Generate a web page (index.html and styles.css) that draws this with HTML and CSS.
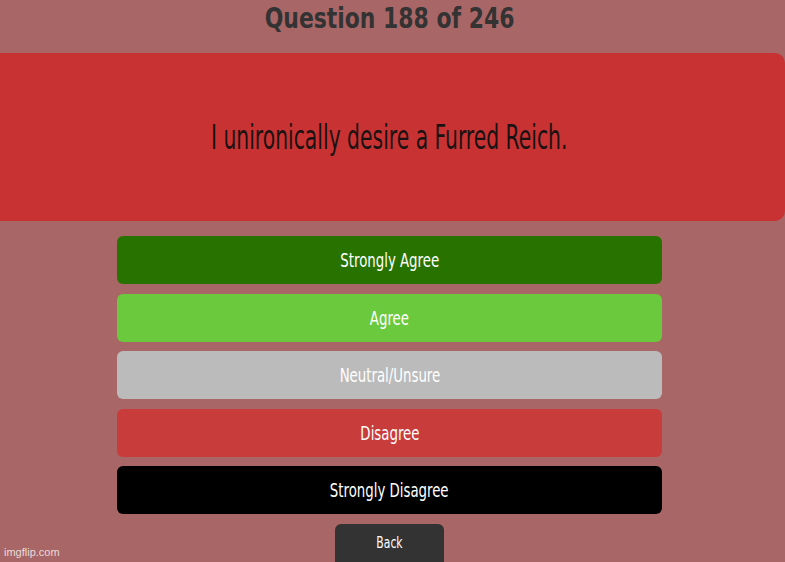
FILE: index.html
```html
<!DOCTYPE html>
<html>
<head>
<meta charset="utf-8">
<link rel="stylesheet" href="styles.css">
</head>
<body>
<div class="page">
  <h1 class="title"><span class="sq">Question 188 of 246</span></h1>
  <div class="card"><p class="question"><span class="sq">I unironically desire a Furred Reich.</span></p></div>
  <div class="answers">
    <div class="btn sa"><span class="sq">Strongly Agree</span></div>
    <div class="btn a"><span class="sq">Agree</span></div>
    <div class="btn n"><span class="sq">Neutral/Unsure</span></div>
    <div class="btn d"><span class="sq">Disagree</span></div>
    <div class="btn sd"><span class="sq">Strongly Disagree</span></div>
  </div>
  <div class="back"><span class="sq">Back</span></div>
</div>
<div class="wm">imgflip.com</div>
</body>
</html>
```
FILE: styles.css
```css
html, body { margin: 0; padding: 0; }
body {
  background: #a96666;
  width: 785px;
  height: 562px;
  overflow: hidden;
  position: relative;
  font-family: "DejaVu Sans Condensed", "DejaVu Sans", sans-serif;
}
.page {
  width: 779px;
  display: flex;
  flex-direction: column;
  align-items: center;
}
.sq {
  display: inline-block;
  white-space: nowrap;
}
.title {
  margin: 0;
  height: 53px;
  line-height: 38px;
  font-size: 28px;
  font-weight: bold;
  color: #333333;
}
.title .sq { transform: scaleX(0.87); }
.card {
  align-self: flex-start;
  width: 785px;
  height: 168px;
  background: #c93232;
  border-radius: 0 10px 10px 0;
  display: flex;
  align-items: center;
  justify-content: center;
}
.question {
  margin: 0 6px 0 0;
  font-size: 33px;
  color: #1a1212;
}
.question .sq { transform: scaleX(0.685); }
.answers {
  margin-top: 15px;
  width: 545px;
  display: flex;
  flex-direction: column;
  gap: 9.5px;
}
.btn {
  height: 48px;
  border-radius: 6px;
  display: flex;
  align-items: center;
  justify-content: center;
  color: #ffffff;
  font-size: 20px;
}
.btn .sq { transform: scaleX(0.74); }
.sa { background: #287300; }
.a { background: #6bc93d; }
.n { background: #bbbbbb; }
.d { background: #c93c3c; }
.sd { background: #000000; }
.back {
  margin-top: 10px;
  width: 109px;
  height: 44px;
  border-radius: 6px;
  background: #333333;
  color: #ffffff;
  font-size: 16px;
  display: flex;
  justify-content: center;
  padding-top: 9px;
  box-sizing: border-box;
}
.back .sq { transform: scaleX(0.75); }
.wm {
  position: absolute;
  left: 4px;
  top: 546px;
  font-family: "Liberation Sans", Arial, sans-serif;
  font-size: 11px;
  color: #e8dcdc;
}
```
